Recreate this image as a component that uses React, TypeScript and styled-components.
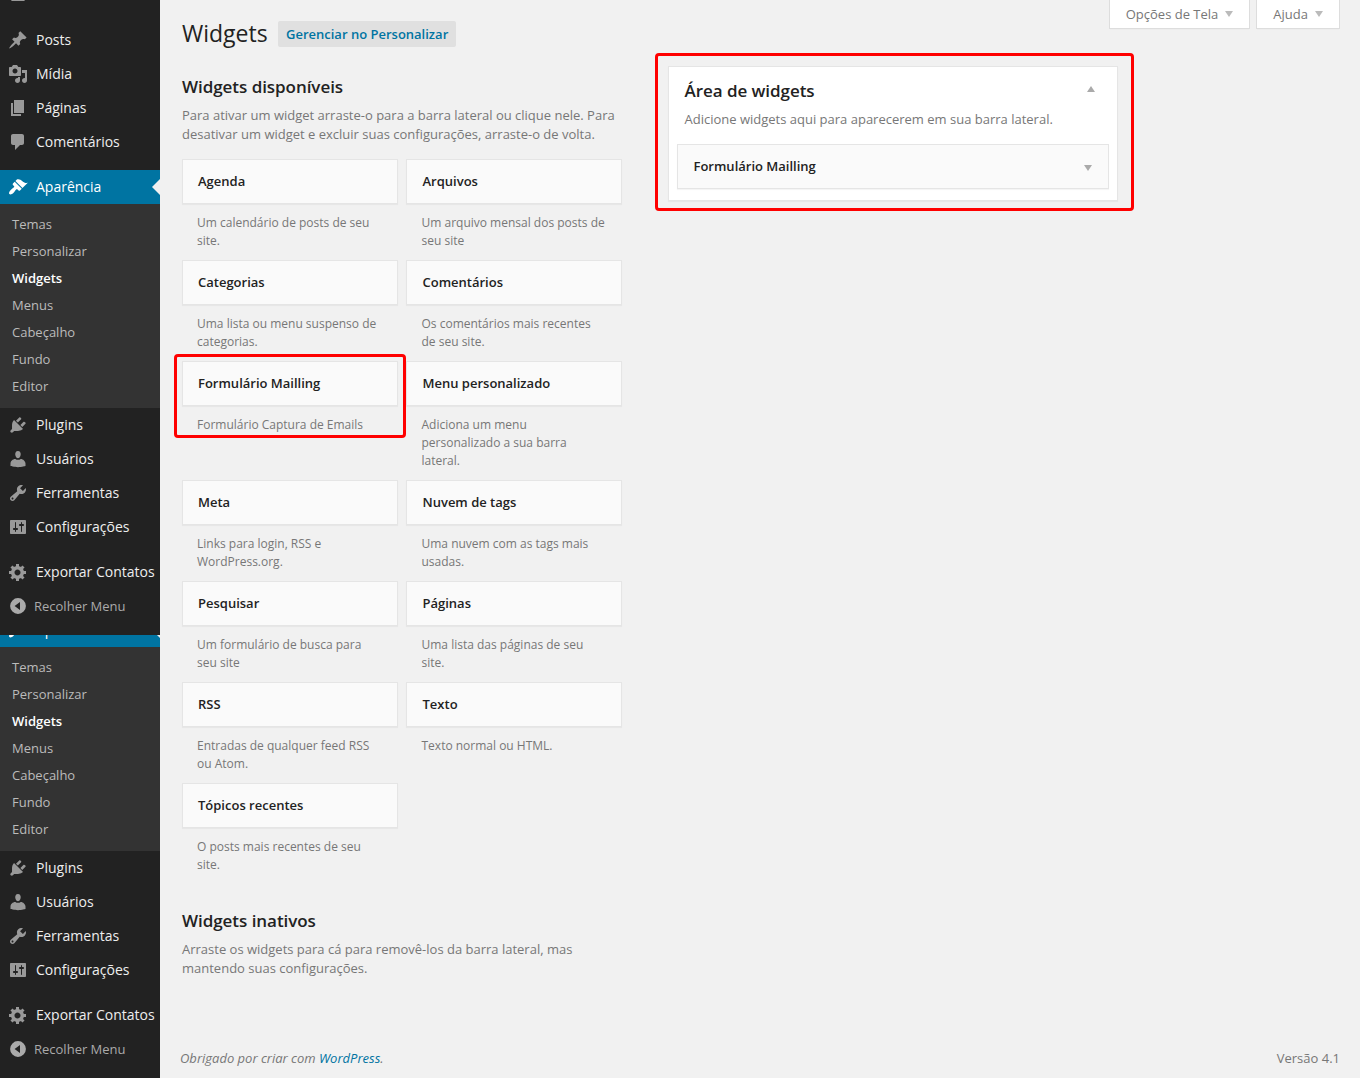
import React from "react";
import styled, { createGlobalStyle, css } from "styled-components";

const GlobalStyle = createGlobalStyle`
  *, *::before, *::after { box-sizing: border-box; }
  body {
    margin: 0;
    background: #f1f1f1;
    color: #777;
    font-family: "Open Sans", sans-serif;
    font-size: 13px;
    line-height: 19px;
  }
  h1, h2, h3, h4, p, ul { margin: 0; padding: 0; }
  ul { list-style: none; }
`;

const ICONS = {
  dashboard: "M3.76 16h12.48A7.998 7.998 0 0 0 10 3a7.998 7.998 0 0 0-6.24 13z",
  post: "M10.44 3.02l1.82-1.82 6.36 6.35-1.83 1.82c-1.05-.68-2.48-.57-3.41.36l-.75.75c-.92.93-1.04 2.35-.35 3.41l-1.83 1.82-2.41-2.41-2.8 2.79c-.42.42-3.38 2.71-3.8 2.29s1.86-3.39 2.28-3.81l2.79-2.79L4.1 9.36l1.83-1.82c1.05.69 2.48.57 3.4-.36l.75-.75c.93-.92 1.05-2.35.36-3.41z",
  media: "M13 11V4c0-.55-.45-1-1-1h-1.67L9 1H5L3.67 3H2c-.55 0-1 .45-1 1v7c0 .55.45 1 1 1h10c.55 0 1-.45 1-1zM7 4.5c1.38 0 2.5 1.12 2.5 2.5S8.38 9.5 7 9.5 4.5 8.38 4.5 7 5.62 4.5 7 4.5zM14 6h5v10.5c0 1.38-1.12 2.5-2.5 2.5S14 17.88 14 16.5s1.12-2.5 2.5-2.5c.17 0 .34.02.5.05V9h-3V6zm-4 8.05V13h2v3.5c0 1.38-1.12 2.5-2.5 2.5S7 17.88 7 16.5 8.12 14 9.5 14c.17 0 .34.02.5.05z",
  page: "M6 15V2h10v13H6zm-1 1h8v2H3V5h2v11z",
  comments: "M5 2h9c1.1 0 2 .9 2 2v7c0 1.1-.9 2-2 2h-2l-5 5v-5H5c-1.1 0-2-.9-2-2V4c0-1.1.9-2 2-2z",
  appearance: "M14.48 11.06L7.41 3.99l1.5-1.5c.5-.56 2.3-.47 3.51.32 1.21.8 1.43 1.28 2.91 2.1 1.18.64 2.45 1.26 4.45.85zm-.71.71L6.7 4.7 4.93 6.47c-.39.39-.39 1.02 0 1.41l1.06 1.06c.39.39.39 1.03 0 1.42-.6.6-1.43 1.11-2.21 1.69-.35.26-.7.53-1.01.84C1.43 14.23.4 16.08 1.4 17.07c.99 1 2.84-.03 4.18-1.36.31-.31.58-.66.85-1.02.57-.78 1.08-1.61 1.69-2.21.39-.39 1.02-.39 1.41 0l1.06 1.06c.39.39 1.02.39 1.41 0z",
  plugins: "M13.11 4.36L9.87 7.6 8 5.73l3.24-3.24c.35-.34 1.05-.2 1.56.32.52.51.66 1.21.31 1.55zm-8 1.77l.91-1.12 9.01 9.01-1.19.84c-.71.71-2.63 1.16-3.82 1.16H6.14L4.9 17.26c-.59.59-1.54.59-2.12 0-.59-.58-.59-1.53 0-2.12l1.24-1.24v-3.88c0-1.13.4-3.19 1.09-3.89zm7.26 3.97l3.24-3.24c.34-.35 1.04-.21 1.55.31.52.51.66 1.21.31 1.55l-3.24 3.25z",
  users: "M10 9.25c-2.27 0-2.73-3.44-2.73-3.44C7 4.02 7.82 2 9.97 2c2.16 0 2.98 2.02 2.71 3.81 0 0-.41 3.44-2.68 3.44zM7.3 10c.8.55 1.7.85 2.7.85s1.9-.3 2.72-.85c2.39 0 4.78 2.33 4.78 4.53v2.49s-3.65 1.13-7.5 1.13c-3.75 0-7.5-1.13-7.5-1.13v-2.49c0-2.25 2.2-4.53 4.8-4.53z",
  tools: "M16.68 9.77c-1.34 1.34-3.3 1.67-4.95.99l-5.41 6.52c-.99.99-2.59.99-3.58 0s-.99-2.59 0-3.57l6.52-5.42c-.68-1.65-.35-3.61.99-4.95 1.28-1.28 3.12-1.62 4.72-1.06l-2.89 2.89 2.82 2.82 2.86-2.87c.53 1.58.18 3.39-1.08 4.65zM3.81 16.21c.4.39 1.04.39 1.43 0 .4-.4.4-1.04 0-1.43-.39-.4-1.03-.4-1.43 0-.39.39-.39 1.03 0 1.43z",
  settings: "M18 16V4c0-.55-.45-1-1-1H3c-.55 0-1 .45-1 1v12c0 .55.45 1 1 1h14c.55 0 1-.45 1-1zM8 11h1c.55 0 1 .45 1 1s-.45 1-1 1H8v1.5c0 .28-.22.5-.5.5s-.5-.22-.5-.5V13H6c-.55 0-1-.45-1-1s.45-1 1-1h1V5.5c0-.28.22-.5.5-.5s.5.22.5.5V11zm5-2h-1c-.55 0-1-.45-1-1s.45-1 1-1h1V5.5c0-.28.22-.5.5-.5s.5.22.5.5V7h1c.55 0 1 .45 1 1s-.45 1-1 1h-1v5.5c0 .28-.22.5-.5.5s-.5-.22-.5-.5V9z",
  generic: "M18 12h-2.18c-.17.7-.44 1.35-.81 1.93l1.54 1.54-2.1 2.1-1.54-1.54c-.58.36-1.23.63-1.91.79V19H8v-2.18c-.68-.16-1.33-.43-1.91-.79l-1.54 1.54-2.12-2.12 1.54-1.54c-.36-.58-.63-1.23-.79-1.91H1V9.03h2.17c.16-.7.44-1.35.8-1.94L2.43 5.55l2.1-2.1 1.54 1.54c.58-.37 1.24-.64 1.93-.81V2h3v2.18c.68.16 1.33.43 1.91.79l1.54-1.54 2.12 2.12-1.54 1.54c.36.59.64 1.24.8 1.94H18V12zm-8.5 1.5c1.66 0 3-1.34 3-3s-1.34-3-3-3-3 1.34-3 3 1.34 3 3 3z",
  collapse: "M10 2.1a7.9 7.9 0 1 0 0 15.8 7.9 7.9 0 0 0 0-15.8zM12 6v8L6.6 10z",
};
type IconName = keyof typeof ICONS;

const Page = styled.div`
  display: flex;
  width: 1360px;
  height: 1078px;
  overflow: hidden;
`;

/* ---------- sidebar ---------- */

const Sidebar = styled.nav`
  width: 160px;
  flex: none;
  background: #222;
`;

const MenuSection = styled.div<{ $height: number }>`
  height: ${(p) => p.$height}px;
  overflow: hidden;
`;

const MenuList = styled.ul`
  margin-top: -22px;
`;

const Separator = styled.li`
  height: 11px;
`;

const MenuRow = styled.li<{ $active?: boolean; $muted?: boolean }>`
  display: flex;
  align-items: center;
  height: 34px;
  padding-left: 8px;
  gap: 8px;
  color: #eee;
  font-size: 14px;
  line-height: 18px;
  white-space: nowrap;
  ${(p) => p.$active && css`
    background: #0074a2;
    color: #fff;
  `}
  ${(p) => p.$muted && css`
    color: #aaa;
    font-size: 13px;
    gap: 6px;
  `}
`;

const MenuIcon = styled.svg<{ $fill: string }>`
  width: 20px;
  height: 20px;
  flex: none;
  fill: ${(p) => p.$fill};
`;

const Pointer = styled.span`
  margin-left: auto;
  border: 8px solid transparent;
  border-left-width: 0;
  border-right-color: #f1f1f1;
`;

const Submenu = styled.ul`
  height: 204px;
  padding: 7px 0 8px;
  background: #333;
`;

const SubmenuItem = styled.li<{ $current?: boolean }>`
  height: 27px;
  padding: 5px 12px;
  font-size: 13px;
  line-height: 17px;
  color: ${(p) => (p.$current ? "#fff" : "#bbb")};
  font-weight: ${(p) => (p.$current ? 600 : 400)};
`;

const Icon = ({ name, fill = "#999" }: { name: IconName; fill?: string }) => (
  <MenuIcon viewBox="0 0 20 20" $fill={fill} aria-hidden>
    <path d={ICONS[name]} fillRule={name === "collapse" ? "evenodd" : "nonzero"} />
  </MenuIcon>
);

const Item = ({ icon, label }: { icon: IconName; label: string }) => (
  <MenuRow>
    <Icon name={icon} />
    {label}
  </MenuRow>
);

const SUBMENU = ["Temas", "Personalizar", "Widgets", "Menus", "Cabeçalho", "Fundo", "Editor"];

const LowerMenu = () => (
  <>
    <MenuRow $active>
      <Icon name="appearance" fill="#fff" />
      Aparência
      <Pointer />
    </MenuRow>
    <li>
      <Submenu>
        {SUBMENU.map((s) => (
          <SubmenuItem key={s} $current={s === "Widgets"}>{s}</SubmenuItem>
        ))}
      </Submenu>
    </li>
    <Item icon="plugins" label="Plugins" />
    <Item icon="users" label="Usuários" />
    <Item icon="tools" label="Ferramentas" />
    <Item icon="settings" label="Configurações" />
    <Separator />
    <Item icon="generic" label="Exportar Contatos" />
    <MenuRow $muted>
      <Icon name="collapse" fill="#aaa" />
      Recolher Menu
    </MenuRow>
  </>
);

/* ---------- content ---------- */

const Content = styled.main`
  display: flex;
  flex-direction: column;
  flex: 1;
  padding: 0 20px 0 22px;
`;

const Header = styled.header`
  display: flex;
  justify-content: space-between;
  height: 53px;
`;

const TitleGroup = styled.div`
  display: flex;
  gap: 10px;
  align-items: flex-start;
`;

const Title = styled.h1`
  padding-top: 19px;
  width: 86px;
  color: #222;
  font-size: 23px;
  font-weight: 400;
  line-height: 29px;
`;

const TitleAction = styled.a`
  margin-top: 21px;
  height: 26px;
  padding: 4px 8px;
  border-radius: 2px;
  background: #e0e0e0;
  color: #0074a2;
  font-weight: 600;
  line-height: 18px;
  white-space: nowrap;
`;

const Tabs = styled.div`
  display: flex;
  gap: 6px;
  align-items: flex-start;
`;

const Tab = styled.button`
  display: flex;
  align-items: center;
  gap: 7px;
  height: 29px;
  padding: 0 16px;
  border: 1px solid #ddd;
  border-top: 0;
  background: #fff;
  box-shadow: 0 1px 1px -1px rgba(0, 0, 0, 0.1);
  color: #777;
  font: inherit;
  white-space: nowrap;
`;

const Arrow = styled.span<{ $up?: boolean; $color?: string }>`
  flex: none;
  border: 4px solid transparent;
  ${(p) => p.$up
    ? css`
      margin-bottom: 4px;
      border-top-width: 0;
      border-bottom: 6px solid ${p.$color ?? "#aaa"};
    `
    : css`
      border-bottom-width: 0;
      border-top: 6px solid ${p.$color ?? "#aaa"};
    `}
`;

const Columns = styled.div`
  display: flex;
  flex: 1;
  align-items: flex-start;
  gap: 33px;
`;

const LeftColumn = styled.section`
  width: 440px;
  padding-top: 22px;
`;

const Heading = styled.h2`
  color: #222;
  font-size: 17px;
  font-weight: 600;
  letter-spacing: -0.05px;
  line-height: 24px;
  white-space: nowrap;
`;

const Description = styled.p`
  padding-top: 7px;
  white-space: pre-line;
`;

const WidgetGrid = styled.div`
  display: grid;
  grid-template-columns: 216px 216px;
  column-gap: 8px;
  padding: 15px 0 25px;
`;

const Widget = styled.article`
  position: relative;
  padding-bottom: 10px;
`;

const WidgetCard = styled.div<{ $indent?: number }>`
  display: flex;
  align-items: center;
  justify-content: space-between;
  height: 45px;
  padding: 0 16px 0 ${(p) => p.$indent ?? 15}px;
  border: 1px solid #e5e5e5;
  background: #fafafa;
  box-shadow: 0 1px 1px rgba(0, 0, 0, 0.04);
`;

const CardArrow = styled(Arrow)`
  margin-top: 2px;
`;

const WidgetTitle = styled.h4`
  color: #222;
  font-size: 13px;
  font-weight: 600;
  line-height: 19px;
`;

const WidgetText = styled.p<{ $indent: number }>`
  padding: 10px 0 0 ${(p) => p.$indent}px;
  font-size: 12px;
  line-height: 18px;
  white-space: pre-line;
`;

/* Red marker drawn over the widget it calls out. */
const Marker = styled.span`
  position: absolute;
  inset: -7px -8px auto -8px;
  height: 84px;
  border: 3px solid #f00;
  border-radius: 4px;
  z-index: 1;
`;

const AreaFrame = styled.section`
  width: 479px;
  height: 158px;
  padding: 10px;
  border: 3px solid #f00;
  border-radius: 4px;
`;

const Area = styled.div`
  width: 450px;
  height: 135px;
  padding: 0 8px;
  border: 1px solid #e5e5e5;
  background: #fff;
  box-shadow: 0 1px 1px rgba(0, 0, 0, 0.04);
`;

const AreaHeader = styled.div`
  display: flex;
  justify-content: space-between;
  align-items: center;
  padding: 12px 14px 0 7.5px;
`;

const AreaText = styled.p`
  padding: 7px 7.5px 15px;
`;

const Footer = styled.footer`
  display: flex;
  justify-content: space-between;
  height: 29px;
  margin-left: -2px;
`;

const Thanks = styled.p`
  font-style: italic;
`;

const Link = styled.a`
  color: #0074a2;
`;

const WIDGETS: { title: string; text: string; marked?: boolean }[] = [
  { title: "Agenda", text: "Um calendário de posts de seu\nsite." },
  { title: "Arquivos", text: "Um arquivo mensal dos posts de\nseu site" },
  { title: "Categorias", text: "Uma lista ou menu suspenso de\ncategorias." },
  { title: "Comentários", text: "Os comentários mais recentes\nde seu site." },
  { title: "Formulário Mailling", text: "Formulário Captura de Emails", marked: true },
  { title: "Menu personalizado", text: "Adiciona um menu\npersonalizado a sua barra\nlateral." },
  { title: "Meta", text: "Links para login, RSS e\nWordPress.org." },
  { title: "Nuvem de tags", text: "Uma nuvem com as tags mais\nusadas." },
  { title: "Pesquisar", text: "Um formulário de busca para\nseu site" },
  { title: "Páginas", text: "Uma lista das páginas de seu\nsite." },
  { title: "RSS", text: "Entradas de qualquer feed RSS\nou Atom." },
  { title: "Texto", text: "Texto normal ou HTML." },
  { title: "Tópicos recentes", text: "O posts mais recentes de seu\nsite." },
];

export default function App() {
  return (
    <>
      <GlobalStyle />
      <Page>
        <Sidebar>
          <MenuSection $height={635}>
            <MenuList>
              <MenuRow><Icon name="dashboard" /></MenuRow>
              <Separator />
              <Item icon="post" label="Posts" />
              <Item icon="media" label="Mídia" />
              <Item icon="page" label="Páginas" />
              <Item icon="comments" label="Comentários" />
              <Separator />
              <LowerMenu />
            </MenuList>
          </MenuSection>
          <MenuSection $height={443}>
            <MenuList>
              <LowerMenu />
            </MenuList>
          </MenuSection>
        </Sidebar>
        <Content>
          <Header>
            <TitleGroup>
              <Title>Widgets</Title>
              <TitleAction>Gerenciar no Personalizar</TitleAction>
            </TitleGroup>
            <Tabs>
              <Tab>Opções de Tela<Arrow $color="#bbb" /></Tab>
              <Tab>Ajuda<Arrow $color="#bbb" /></Tab>
            </Tabs>
          </Header>
          <Columns>
            <LeftColumn>
              <Heading>Widgets disponíveis</Heading>
              <Description>
                {"Para ativar um widget arraste-o para a barra lateral ou clique nele. Para\ndesativar um widget e excluir suas configurações, arraste-o de volta."}
              </Description>
              <WidgetGrid>
                {WIDGETS.map((w, i) => {
                  const indent = i % 2 ? 15.5 : 15;
                  return (
                    <Widget key={w.title}>
                      <WidgetCard $indent={indent}><WidgetTitle>{w.title}</WidgetTitle></WidgetCard>
                      <WidgetText $indent={indent}>{w.text}</WidgetText>
                      {w.marked && <Marker />}
                    </Widget>
                  );
                })}
              </WidgetGrid>
              <Heading>Widgets inativos</Heading>
              <Description>
                {"Arraste os widgets para cá para removê-los da barra lateral, mas\nmantendo suas configurações."}
              </Description>
            </LeftColumn>
            <AreaFrame>
              <Area>
                <AreaHeader>
                  <Heading>Área de widgets</Heading>
                  <Arrow $up />
                </AreaHeader>
                <AreaText>Adicione widgets aqui para aparecerem em sua barra lateral.</AreaText>
                <WidgetCard $indent={15.5}>
                  <WidgetTitle>Formulário Mailling</WidgetTitle>
                  <CardArrow />
                </WidgetCard>
              </Area>
            </AreaFrame>
          </Columns>
          <Footer>
            <Thanks>Obrigado por criar com <Link>WordPress</Link>.</Thanks>
            <p>Versão 4.1</p>
          </Footer>
        </Content>
      </Page>
    </>
  );
}
